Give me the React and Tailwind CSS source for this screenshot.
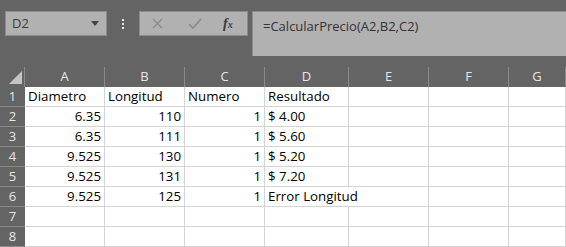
import React from 'react';

const cols = ['A', 'B', 'C', 'D', 'E', 'F', 'G'];

const rows = [
  ['Diametro', 'Longitud', 'Numero', 'Resultado'],
  ['6.35', '110', '1', '$ 4.00'],
  ['6.35', '111', '1', '$ 5.60'],
  ['9.525', '130', '1', '$ 5.20'],
  ['9.525', '131', '1', '$ 7.20'],
  ['9.525', '125', '1', 'Error Longitud'],
  [],
  [],
];

const gridCols = 'grid grid-cols-[25px_80px_80px_80px_84px_80px_80px_1fr]';

const Cell = ({ value, rowIdx, colIdx }) => {
  // numbers align right like excel, text left
  const isNum = value !== undefined && /^[0-9.]+$/.test(value);
  const overflow = rowIdx === 5 && colIdx === 3;
  return (
    <div
      className={`h-5 border-b border-[#d4d4d4] bg-white flex items-end pb-[3px] text-[13.3px] leading-none text-black whitespace-nowrap ${
        overflow ? 'overflow-visible z-10' : 'border-r overflow-hidden'
      } ${isNum ? 'justify-end pr-[3px]' : 'justify-start pl-[3px]'}`}
    >
      {value}
    </div>
  );
};

export default function App() {
  return (
    <div className="w-[566px] h-[247px] overflow-hidden bg-[#646464] font-['Open_Sans',sans-serif]">
      {/* formula bar */}
      <div className="h-[67px] flex items-start pt-[11px] pl-[5px]">
        <div className="w-[102px] h-[25px] bg-[#b1b1b1] border border-[#8c8c8c] flex items-center justify-between pl-[6px] pr-[7px]">
          <span className="text-[13px] text-[#3c3c3c]">D2</span>
          <svg width="8" height="5" viewBox="0 0 8 5">
            <path d="M0 0 L8 0 L4 5 Z" fill="#444" />
          </svg>
        </div>
        <div className="w-[32px] h-[25px] flex flex-col items-center justify-center gap-[2px]">
          <span className="w-[2px] h-[2px] bg-[#e8e8e8]" />
          <span className="w-[2px] h-[2px] bg-[#e8e8e8]" />
          <span className="w-[2px] h-[2px] bg-[#e8e8e8]" />
        </div>
        <div className="w-[109px] h-[25px] bg-[#b1b1b1] border border-[#8c8c8c] flex items-center pl-[12px]">
          <svg width="11" height="11" viewBox="0 0 11 11">
            <path d="M1 1 L10 10 M10 1 L1 10" stroke="#8a8a8a" strokeWidth="1.4" />
          </svg>
          <svg width="14" height="11" viewBox="0 0 14 11" className="ml-[25px]">
            <path d="M1 6 L5 10 L13 1" stroke="#8a8a8a" strokeWidth="1.6" fill="none" />
          </svg>
          <span className="ml-[21px] font-['Liberation_Serif',serif] italic font-bold text-[14px] text-[#3a3a3a] leading-none">
            f<span className="text-[10px]">x</span>
          </span>
        </div>
        <div className="ml-[4px] flex-1 h-[45px] bg-[#b1b1b1] border-t border-l border-[#8c8c8c] pl-[10px] pt-[5px] text-[13px] text-[#333]">
          =CalcularPrecio(A2,B2,C2)
        </div>
      </div>

      {/* column headers */}
      <div className={`${gridCols} h-5`}>
        <div className="flex items-end justify-end pr-[2px] pb-[3px] border-r border-[#8a8a8a]">
          <svg width="13" height="13" viewBox="0 0 13 13">
            <path d="M13 0 L13 13 L0 13 Z" fill="#c4c4c4" />
          </svg>
        </div>
        {cols.map((c) => (
          <div
            key={c}
            className="flex items-center justify-center text-[13px] text-[#e6e6e6] border-r border-[#8a8a8a]"
          >
            {c}
          </div>
        ))}
      </div>

      {/* rows */}
      {rows.map((r, i) => (
        <div key={i} className={gridCols}>
          <div className="h-5 flex items-center justify-center text-[13px] text-[#e6e6e6] border-b border-[#8a8a8a]">
            {i + 1}
          </div>
          {cols.map((c, j) => (
            <Cell key={c} value={r[j]} rowIdx={i} colIdx={j} />
          ))}
        </div>
      ))}
    </div>
  );
}
